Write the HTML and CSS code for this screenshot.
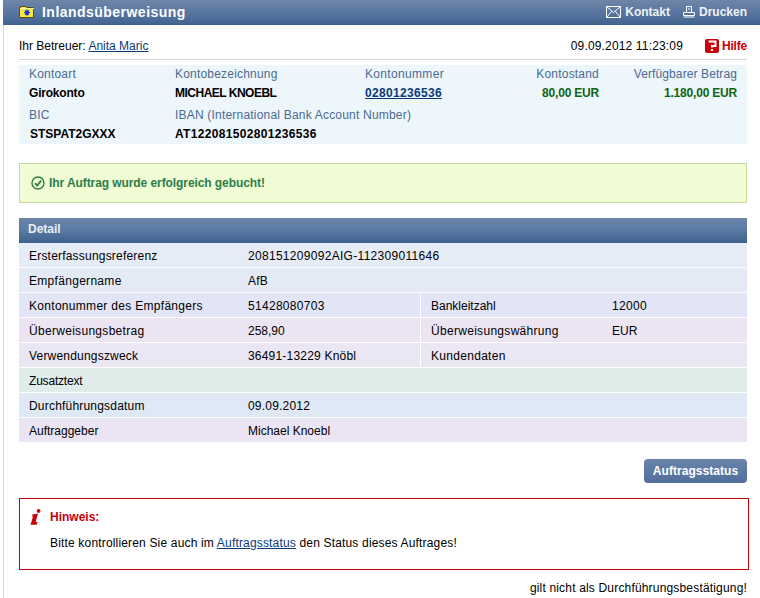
FILE: index.html
```html
<!DOCTYPE html>
<html lang="de">
<head>
<meta charset="utf-8">
<title>Inlandsüberweisung</title>
<link rel="stylesheet" href="styles.css">
</head>
<body>
<div class="page">
  <header class="topbar">
    <div class="title">
      <svg class="folder" width="16" height="13" viewBox="0 0 16 13"><path d="M1.5 2.5V1.5H6.5L7.5 2.5H14.5V12.5H.5V2.5Z" fill="#f7e640" stroke="#5a4c12"/><path d="M1 3H15V4H1Z" fill="#fff8a0"/><path d="M8 4.5V10.5M5 7.5H11M6 5.5L10 9.5M10 5.5L6 9.5" stroke="#1a2fd0" stroke-width="1.2"/></svg>
      <span>Inlandsüberweisung</span>
    </div>
    <nav class="tools">
      <span class="tool"><svg width="15" height="12" viewBox="0 0 15 12" fill="none" stroke="#fff"><path d="M.5.5H14.5V11.5H.5ZM.5.5L7.5 6.5L14.5.5M.5 11.5L5.5 5.5M14.5 11.5L9.5 5.5"/></svg>Kontakt</span>
      <span class="tool"><svg width="12" height="12" viewBox="0 0 12 12" fill="none" stroke="#fff"><path d="M3.5.5H8.5V6.5H3.5ZM.5 6.5H11.5V9.5H.5ZM5 3H7M.5 11H11.5"/></svg>Drucken</span>
    </nav>
  </header>
  <main class="content">
    <div class="meta">
      <span>Ihr Betreuer: <a href="#">Anita Maric</a></span>
      <div class="meta-right">
        <span class="date">09.09.2012 11:23:09</span>
        <span class="help"><svg width="14" height="14" viewBox="0 0 14 14"><rect width="14" height="14" rx="2" fill="#c8000a"/><path d="M3.5 2.5H10.5V7H7V8.5M7 10V12" fill="none" stroke="#fff" stroke-width="2"/></svg>Hilfe</span>
      </div>
    </div>
    <section class="account">
      <div class="lbl">Kontoart</div>
      <div class="lbl">Kontobezeichnung</div>
      <div class="lbl num">Kontonummer</div>
      <div class="lbl end">Kontostand</div>
      <div class="lbl end avail">Verfügbarer Betrag</div>
      <div class="val tight">Girokonto</div>
      <div class="val caps">MICHAEL KNOEBL</div>
      <div class="val num"><a href="#">02801236536</a></div>
      <div class="val end tight money">80,00 EUR</div>
      <div class="val end tight money">1.180,00 EUR</div>
      <div class="lbl">BIC</div>
      <div class="lbl wide">IBAN (International Bank Account Number)</div>
      <div class="val bic">STSPAT2GXXX</div>
      <div class="val wide num">AT122081502801236536</div>
    </section>
    <div class="success">
      <svg width="14" height="14" viewBox="0 0 14 14" fill="none" stroke="#2f7d4a"><circle cx="7" cy="7" r="6" stroke-width="1.4"/><path d="M4 7.2L6.2 9.6L10.2 4.6" stroke-width="1.8"/></svg>
      <span>Ihr Auftrag wurde erfolgreich gebucht!</span>
    </div>
    <section class="detail">
      <h2 class="detail-head">Detail</h2>
      <div class="row r1"><div class="c">Ersterfassungsreferenz</div><div class="c s3 wider">208151209092AIG-112309011646</div></div>
      <div class="row r2"><div class="c wider">Empfängername</div><div class="c s3">AfB</div></div>
      <div class="row r3"><div class="c wider">Kontonummer des Empfängers</div><div class="c wider">51428080703</div><div class="c k flat">Bankleitzahl</div><div class="c wider">12000</div></div>
      <div class="row r4"><div class="c wider">Überweisungsbetrag</div><div class="c flat">258,90</div><div class="c k wider">Überweisungswährung</div><div class="c flat">EUR</div></div>
      <div class="row r5"><div class="c">Verwendungszweck</div><div class="c">36491-13229 Knöbl</div><div class="c k wider">Kundendaten</div><div class="c"></div></div>
      <div class="row r6"><div class="c narrow">Zusatztext</div><div class="c s3"></div></div>
      <div class="row r7"><div class="c">Durchführungsdatum</div><div class="c s3">09.09.2012</div></div>
      <div class="row r8"><div class="c flat">Auftraggeber</div><div class="c s3 flat">Michael Knoebl</div></div>
    </section>
    <div class="actions"><button class="btn" type="button">Auftragsstatus</button></div>
    <section class="notice">
      <svg class="notice-icon" width="11" height="16" viewBox="0 0 11 16" fill="#c8000a"><circle cx="8.6" cy="1.9" r="1.9"/><path d="M2.5 5.5L8 4.5L5.6 13H7.6L6.6 15.8H.4L1.4 13L3 7.6H2Z"/></svg>
      <div class="notice-body">
        <div class="notice-title">Hinweis:</div>
        <p>Bitte kontrollieren Sie auch im <a href="#">Auftragsstatus</a> den Status dieses Auftrages!</p>
      </div>
    </section>
    <div class="foot">gilt nicht als Durchführungsbestätigung!</div>
  </main>
</div>
</body>
</html>
```

FILE: styles.css
```css
* { box-sizing: border-box; }
html, body { margin: 0; height: 100%; background: #fff; overflow: hidden; }
body { font: 12px/14px "Liberation Sans", Arial, sans-serif; color: #000; }
a { color: #0b3a78; text-decoration: underline; }
.page { margin-left: 3px; border-left: 1px solid #d2d6dc; height: 598px; }
.topbar {
  margin-left: -1px;
  height: 25px;
  display: flex;
  justify-content: space-between;
  align-items: center;
  padding: 0 13px 1px 16px;
  background: linear-gradient(#6f85a8, #5c7aa3 40%, #42628f);
  color: #fff;
  font-weight: bold;
}
.title { display: flex; align-items: center; gap: 7px; font-size: 14px; letter-spacing: .47px; }
.folder { margin-top: -1px; }
.tools { display: flex; gap: 13px; }
.tool { display: flex; align-items: center; gap: 4px; color: #eef2f7; }
.content { padding: 0 13px 0 15px; }
.meta {
  height: 35px;
  padding-top: 14px;
  border-bottom: 1px solid #cfd6dd;
  display: flex;
  justify-content: space-between;
  align-items: flex-start;
}
.meta-right { display: flex; gap: 22px; }
.date { letter-spacing: .16px; }
.help { display: flex; gap: 3px; color: #c8000a; font-weight: bold; letter-spacing: -.2px; }
.account {
  margin-top: 5px;
  height: 79px;
  padding: 0 10px;
  background: #edf6fb;
  display: grid;
  grid-template-columns: 146px 190px 140px 94px 138px;
  grid-template-rows: 19px 22px 19px 19px;
  line-height: 19px;
}
.lbl { color: #4b6a92; letter-spacing: .2px; }
.avail { letter-spacing: .1px; }
.val { font-weight: bold; }
.bic { padding-left: 1px; }
.wide { grid-column: 2 / 6; }
.end { text-align: right; }
.money { color: #0f6412; }
.tight { letter-spacing: -.2px; }
.caps { letter-spacing: -.5px; }
.num { letter-spacing: .33px; }
.success {
  margin-top: 19px;
  height: 40px;
  border: 1px solid #c8d6a0;
  background: #effcd4;
  display: flex;
  align-items: center;
  gap: 4px;
  padding-left: 11px;
  color: #2f7d4a;
  font-weight: bold;
  letter-spacing: -.08px;
}
.detail { margin-top: 15px; }
.detail-head {
  margin: 0;
  height: 25px;
  padding-left: 9px;
  font-size: 12px;
  line-height: 23px;
  color: #e9eef5;
  background: linear-gradient(#6b84aa, #5c7ca4 45%, #3d608c);
}
.row {
  height: 25px;
  padding-top: 1px;
  border-bottom: 1px solid #fff;
  display: grid;
  grid-template-columns: 219px 182px 182px 145px;
  line-height: 24px;
}
.c { padding-left: 10px; letter-spacing: .2px; }
.wider { letter-spacing: .3px; }
.flat { letter-spacing: 0; }
.narrow { letter-spacing: -.2px; }
.s3 { grid-column: 2 / 5; }
.k { border-left: 1px solid #fff; }
.r1 { background: #e6ecf5; }
.r2 { background: #e3eaf5; }
.r3 { background: #e2e5f5; }
.r4 { background: #ece4f3; }
.r5 { background: #ebe6f3; }
.r6 { background: #e0ece9; }
.r7 { background: #dfe8f5; }
.r8 { background: #ebe4f3; }
.actions { margin-top: 16px; display: flex; justify-content: flex-end; }
.btn {
  width: 103px;
  height: 24px;
  padding: 0;
  border: 0;
  border-radius: 4px;
  background: linear-gradient(#6b84aa, #4f6f9b);
  color: #fff;
  font: bold 12px/24px "Liberation Sans", Arial, sans-serif;
  letter-spacing: .05px;
}
.notice {
  margin-top: 15px;
  width: 730px;
  height: 72px;
  border: 1px solid #c8000a;
  display: flex;
}
.notice-icon { margin: 10px 9px 0 10px; flex: none; }
.notice-title { margin-top: 11px; color: #c8000a; font-weight: bold; }
.notice p { margin: 12px 0 0; letter-spacing: .17px; }
.foot { margin-top: 11px; text-align: right; letter-spacing: .175px; }
```
